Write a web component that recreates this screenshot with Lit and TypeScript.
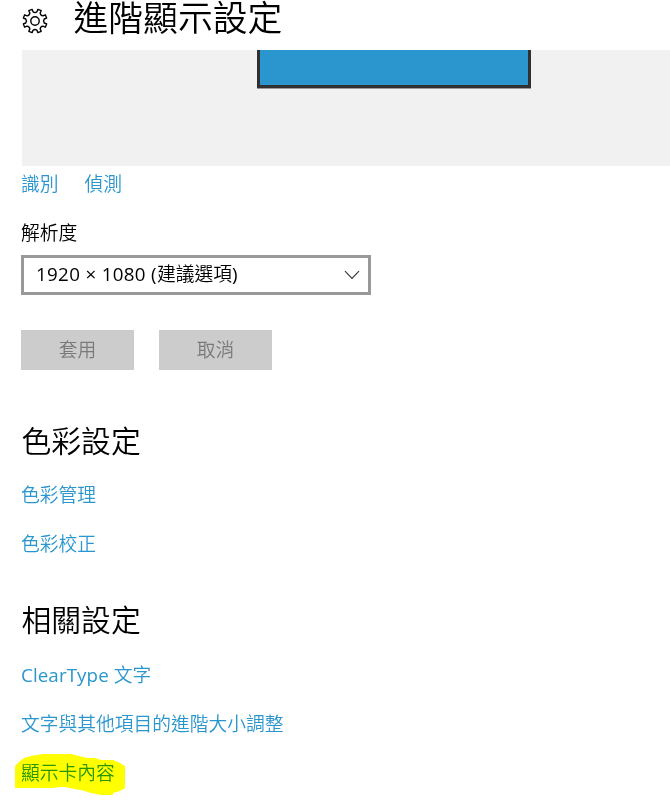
import { LitElement, html, css, svg } from "lit";
import { customElement } from "lit/decorators.js";

const point = (radius: number, degrees: number) => {
  const a = (degrees * Math.PI) / 180;
  return `${(13 + radius * Math.cos(a)).toFixed(2)} ${(13 + radius * Math.sin(a)).toFixed(2)}`;
};

// Eight teeth, with a rounded notch on each multiple of 45 degrees.
const gearPath = () => {
  let d = "";
  for (let k = 0; k < 8; k++) {
    const a = k * 45;
    d += `${k ? "L" : "M"}${point(12, a - 14)}L${point(9.5, a - 12)}`;
    d += `Q${point(7.8, a)} ${point(9.5, a + 12)}L${point(12, a + 14)}`;
  }
  return d + "Z";
};

@customElement("settings-gear")
class SettingsGear extends LitElement {
  static styles = css`
    :host { display: block; width: 26px; height: 26px; }
    svg { display: block; }
    .line { fill: none; stroke: #000; stroke-width: 1.4; stroke-linejoin: round; }
  `;
  render() {
    return html`<svg width="26" height="26" viewBox="0 0 26 26">
      ${svg`<path class="line" d=${gearPath()} />`}
      <circle class="line" cx="13" cy="13" r="4.2" />
    </svg>`;
  }
}

@customElement("app-root")
class AppRoot extends LitElement {
  static styles = css`
    :host {
      display: block;
      height: 809px;
      overflow: hidden;
      background: #fff;
      color: #000;
      font: 350 18.75px/28px "Open Sans", "Noto Sans CJK TC", sans-serif;
    }
    .cjk { font-family: "Noto Sans CJK TC", sans-serif; }
    .latin { font-weight: 400; }
    header { display: flex; height: 50px; }
    settings-gear { margin: 7.5px 0 0 21.5px; }
    h1, h2 { margin: 0; font-weight: 350; white-space: nowrap; }
    h1 {
      margin-left: 26px;
      font-family: "Liberation Sans", "Noto Sans CJK TC", sans-serif;
      font-size: 34.8px;
      line-height: 38px;
      height: 38px;
    }
    h2 { padding-left: 0.5px; font-family: "Noto Sans CJK TC", sans-serif; font-size: 29.8px; line-height: 40px; }
    .preview {
      display: flex;
      height: 116px;
      margin-left: 22px;
      background: #f1f1f1;
    }
    .display {
      width: 268px;
      height: 35px;
      margin-left: 235px;
      background: #2a96cd;
      border: solid #303030;
      border-width: 0 3px 3px;
      box-shadow: 0 1px #999;
    }
    .body { padding-left: 21px; }
    a { color: #2a96cd; text-decoration: none; white-space: nowrap; }
    .actions { display: flex; gap: 26px; height: 28px; margin-top: 3px; }
    .label { margin-top: 21px; height: 28px; }
    .select {
      display: flex;
      align-items: center;
      justify-content: space-between;
      box-sizing: border-box;
      width: 350px;
      height: 40px;
      margin-top: 9px;
      padding: 0 8.5px 2px 12px;
      border: 3px solid #999;
    }
    .select .latin { letter-spacing: 0.33px; }
    .select svg { margin-top: 2px; }
    .chevron { fill: none; stroke: #333; stroke-width: 1.1; }
    .buttons { display: flex; gap: 25px; margin: 35px 0 49px; }
    button {
      width: 113px;
      height: 40px;
      padding: 0 0 2px;
      border: 0;
      background: #ccc;
      color: #7a7a7a;
      font: inherit;
    }
    .links { display: flex; flex-direction: column; align-items: flex-start; gap: 21px; margin-top: 21px; }
    .links + h2 { margin-top: 41px; }
    h2 + .latin-list { margin-top: 23px; }
    .latin-list .latin { letter-spacing: 0.1px; }
    .marked { position: relative; }
    .marker { position: absolute; left: -6px; top: -6px; mix-blend-mode: multiply; pointer-events: none; }
  `;

  render() {
    return html`
      <header><settings-gear></settings-gear><h1>進階顯示設定</h1></header>
      <div class="preview"><div class="display"></div></div>
      <div class="body">
        <div class="actions cjk"><a>識別</a><a>偵測</a></div>
        <div class="label cjk">解析度</div>
        <div class="select">
          <span><span class="latin">1920 × 1080 (</span>建議選項<span class="latin">)</span></span>
          <svg width="16" height="10" viewBox="0 0 16 10"><path class="chevron" d="M1 1.2L8 8.4L15 1.2" /></svg>
        </div>
        <div class="buttons"><button class="cjk">套用</button><button class="cjk">取消</button></div>
        <h2>色彩設定</h2>
        <div class="links cjk"><a>色彩管理</a><a>色彩校正</a></div>
        <h2>相關設定</h2>
        <div class="links latin-list">
          <a><span class="latin">ClearType </span>文字</a>
          <a>文字與其他項目的進階大小調整</a>
          <a class="marked">顯示卡內容
            <svg class="marker" width="112" height="44" viewBox="0 0 112 44">
              <path fill="#ff0" d="M0 35V13L4 9L9 5L16 3L28 1H56L64 3L72 5H80L86 7L98 7L105 10L110 13V35L105 38L98 40V42H86L76 40L66 37L60 36L50 34H44L38 35Z" />
            </svg>
          </a>
        </div>
      </div>
    `;
  }
}
